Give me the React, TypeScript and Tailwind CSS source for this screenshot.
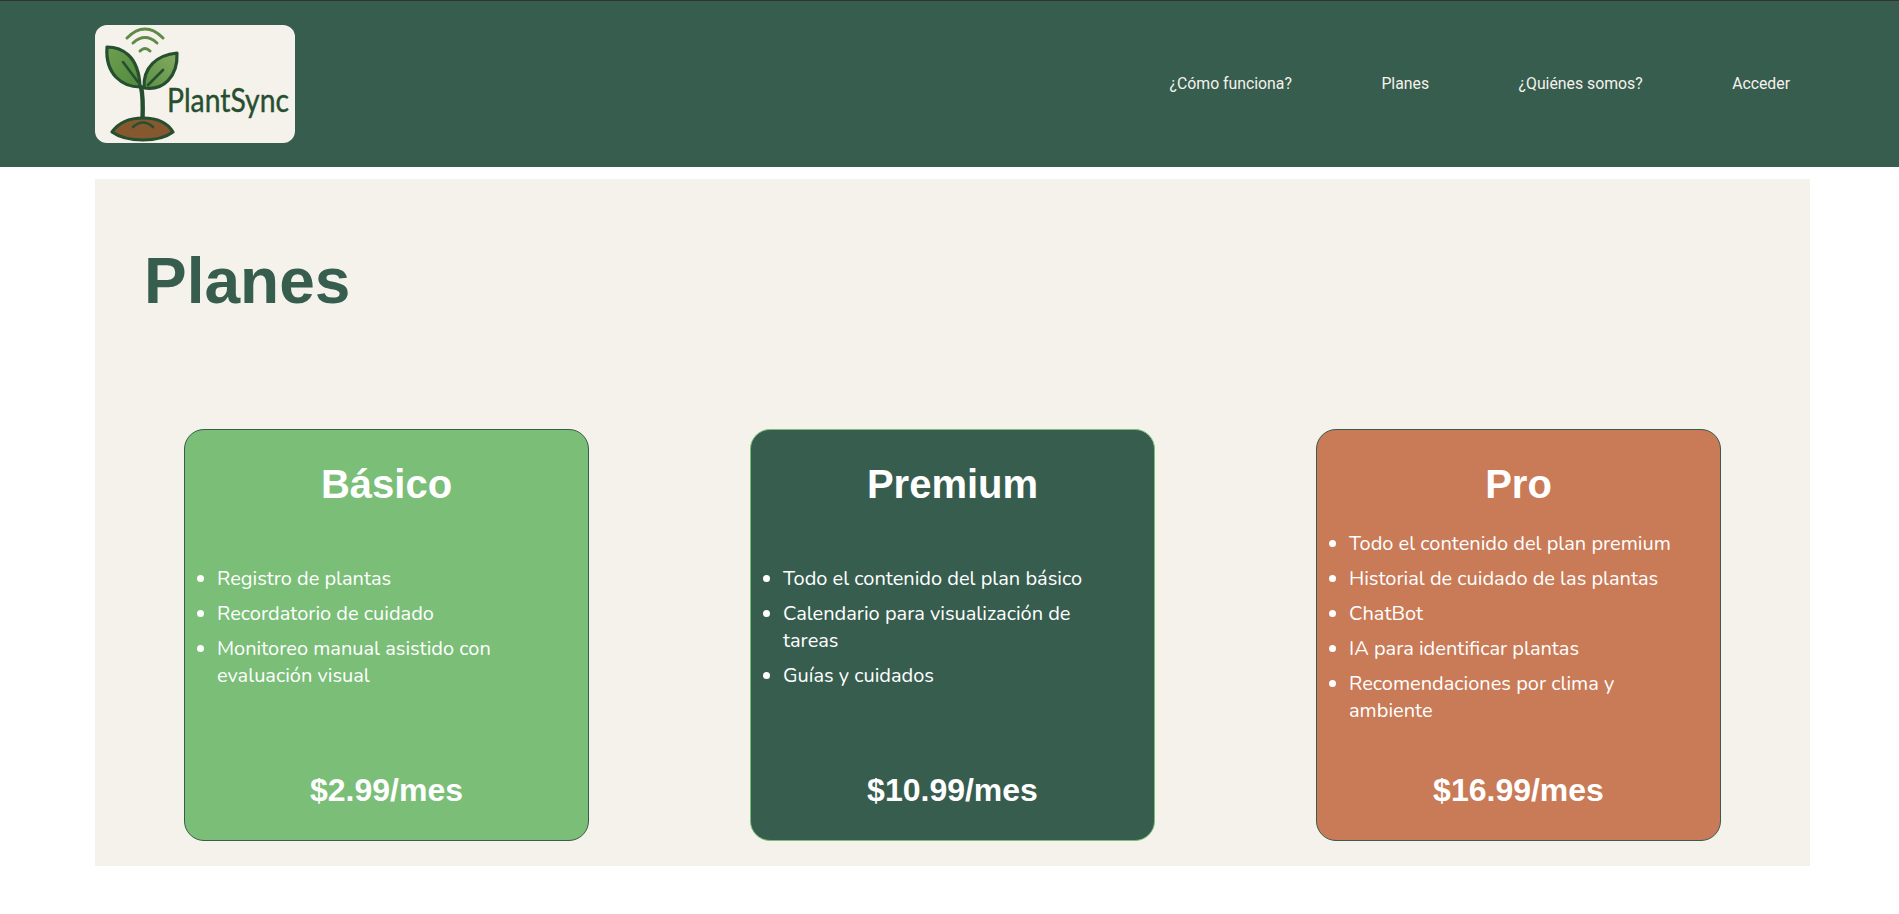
import React from 'react';

const navLinks = ['¿Cómo funciona?', 'Planes', '¿Quiénes somos?', 'Acceder'];

const plans = [
  {
    name: 'Básico',
    price: '$2.99/mes',
    color: 'bg-[#7abe77] border-[#375d4f]',
    items: ['Registro de plantas', 'Recordatorio de cuidado', 'Monitoreo manual asistido con evaluación visual'],
  },
  {
    name: 'Premium',
    price: '$10.99/mes',
    color: 'bg-[#375d4f] border-[#7abe77]',
    items: ['Todo el contenido del plan básico', 'Calendario para visualización de tareas', 'Guías y cuidados'],
  },
  {
    name: 'Pro',
    price: '$16.99/mes',
    color: 'bg-[#c97a57] border-[#375d4f]',
    items: [
      'Todo el contenido del plan premium',
      'Historial de cuidado de las plantas',
      'ChatBot',
      'IA para identificar plantas',
      'Recomendaciones por clima y ambiente',
    ],
  },
];

function Logo() {
  return (
    <div className="w-[200px] h-[118px] bg-[#f5f2eb] rounded-xl">
      <svg width="200" height="118" viewBox="0 0 200 118" fill="none">
        <defs>
          <linearGradient id="leafLeft" x1="0" y1="0" x2="1" y2="1">
            <stop offset="0" stopColor="#6f9e50" />
            <stop offset="1" stopColor="#4f8a3c" />
          </linearGradient>
          <linearGradient id="leafRight" x1="1" y1="0" x2="0" y2="1">
            <stop offset="0" stopColor="#86ab62" />
            <stop offset="1" stopColor="#5a9044" />
          </linearGradient>
        </defs>
        <g stroke="#5f8a47" strokeWidth="3" strokeLinecap="round">
          <path d="M32 13 Q50 -5 68 13" />
          <path d="M38 18 Q50 7 62 18" />
          <path d="M45 26 Q50 21 55 26" />
        </g>
        <path d="M12 22 C26 22 44 30 45 62 C28 62 10 50 12 22 Z" fill="url(#leafLeft)" stroke="#264f30" strokeWidth="3.2" strokeLinejoin="round" />
        <path d="M82 28 C62 30 48 42 49 63 C68 66 83 52 82 28 Z" fill="url(#leafRight)" stroke="#264f30" strokeWidth="3.2" strokeLinejoin="round" />
        <path d="M28 37 L43 57 M68 45 L53 60" stroke="#264f30" strokeWidth="2.6" strokeLinecap="round" />
        <path d="M46 62 C48 70 48 82 47.5 95" stroke="#264f30" strokeWidth="4.4" strokeLinecap="round" />
        <path d="M17 107 C24 97 36 93 48 93 C60 93 72 97 78 107 C70 113 58 115 48 115 C34 115 24 112 17 107 Z" fill="#85582f" stroke="#264f30" strokeWidth="3.2" strokeLinejoin="round" />
        <path d="M38 102 Q48 93 58 102" stroke="#264f30" strokeWidth="2.6" strokeLinecap="round" />
        <text x="72" y="87" fill="#264f30" stroke="#264f30" strokeWidth="0.4" fontSize="32" textLength="122" lengthAdjust="spacingAndGlyphs" className="font-['Lato',sans-serif]">
          PlantSync
        </text>
      </svg>
    </div>
  );
}

function PlanCard({ plan }: { plan: (typeof plans)[number] }) {
  return (
    <div className={`w-[405px] h-[412px] ${plan.color} border rounded-[20px] flex flex-col items-center text-white pt-[31px] pb-[31px]`}>
      <h2 className="text-[40px] leading-[46px] font-bold font-['Liberation_Sans',sans-serif]">{plan.name}</h2>
      <div className="flex-1 w-full flex items-center pb-[25px]">
        <ul className="list-disc pl-[32px] pr-[40px] text-[20px] leading-[27px] font-['Nunito',sans-serif]">
          {plan.items.map(item => (
            <li key={item} className="my-2">{item}</li>
          ))}
        </ul>
      </div>
      <p className="text-[32px] leading-[37px] font-bold font-['Liberation_Sans',sans-serif]">{plan.price}</p>
    </div>
  );
}

export default function App() {
  return (
    <div className="min-h-[914px] bg-white font-['Liberation_Sans',sans-serif]">
      <header className="h-[167px] bg-[#375d4f] border-t border-[#333333] flex items-center justify-between pl-[95px] pr-[109px]">
        <Logo />
        <nav className="flex gap-[89.5px] text-[15.8px] text-[#f5f2eb] font-['Roboto',sans-serif]">
          {navLinks.map(link => (
            <a key={link} href="#">{link}</a>
          ))}
        </nav>
      </header>

      <main className="mx-[95px] mt-3 w-[1715px] h-[687px] bg-[#f5f2eb] pt-[65px]">
        <h1 className="ml-[49px] text-[64px] leading-[74px] font-bold text-[#375d4f]">Planes</h1>
        <section className="mt-[111px] pl-[89px] flex gap-[161px]">
          {plans.map(plan => (
            <PlanCard key={plan.name} plan={plan} />
          ))}
        </section>
      </main>
    </div>
  );
}
